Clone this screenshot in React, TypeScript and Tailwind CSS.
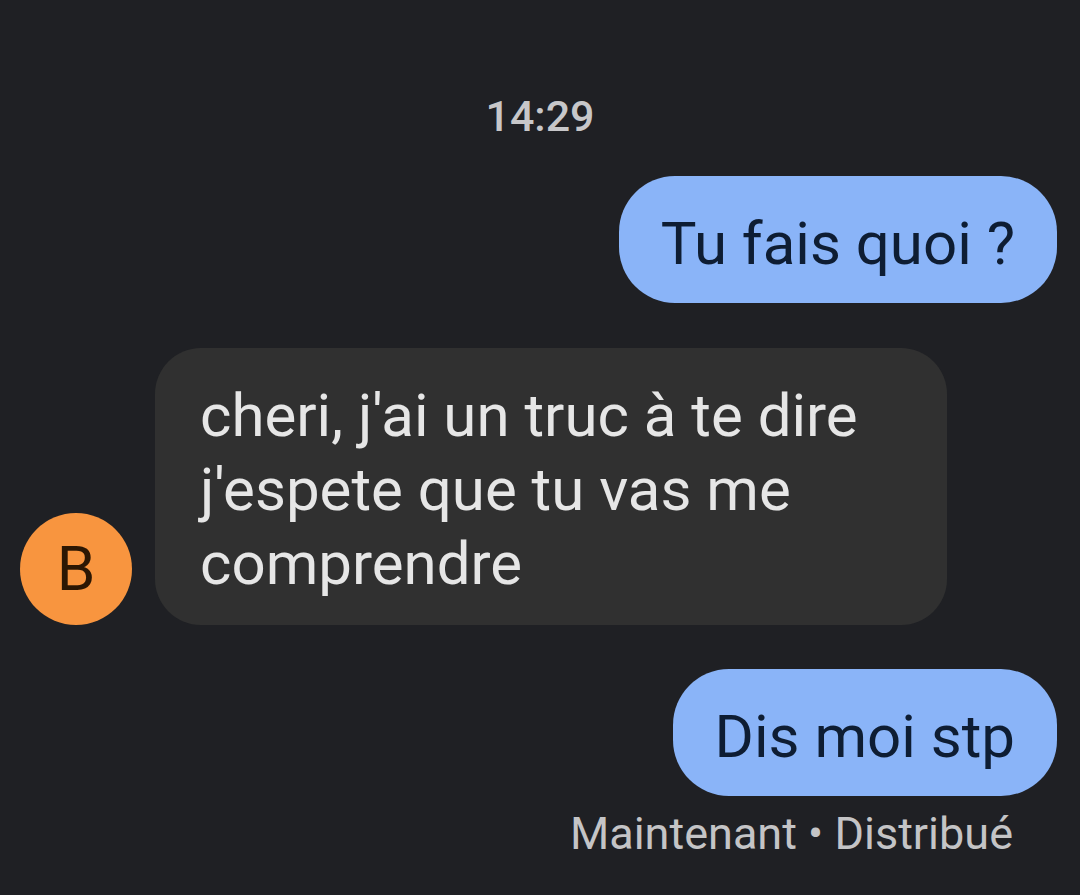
import React from "react";

const incoming = ["cheri, j'ai un truc à te dire", "j'espete que tu vas me", "comprendre"];

function Outgoing({ text }: { text: string }) {
  return (
    <div className="flex justify-end pr-[23px]">
      <div className="rounded-[56px] bg-[#8ab4f8] px-[42px] pt-[31px] pb-[22px] text-[60px] leading-[74px] text-[#0e1d33]">
        {text}
      </div>
    </div>
  );
}

export default function App() {
  return (
    <div className="h-[895px] w-full overflow-hidden bg-[#1f2024] font-['Roboto','Noto_Sans',sans-serif]">
      {/* heure */}
      <div className="pt-[90px] text-center text-[43px] leading-[52px] font-medium text-[#c7c7c9]">
        14:29
      </div>

      <div className="mt-[34px]">
        <Outgoing text="Tu fais quoi ?" />
      </div>

      {/* message reçu */}
      <div className="mt-[45px] flex items-end pl-[20px]">
        <div className="flex h-[112px] w-[112px] shrink-0 items-center justify-center rounded-full bg-[#f8953f] text-[62px] leading-none text-[#2c1703]">
          B
        </div>
        <div className="ml-[23px] w-[792px] rounded-[46px] bg-[#303030] px-[45px] pt-[31px] pb-[24px] text-[60px] leading-[74px] text-[#e6e6e6]">
          {incoming.map((line, i) => (
            <div key={i}>{line}</div>
          ))}
        </div>
      </div>

      <div className="mt-[44px]">
        <Outgoing text="Dis moi stp" />
      </div>

      <div className="mt-[12px] pr-[67px] text-right text-[45px] leading-[52px] text-[#c4c4c6]">
        Maintenant • Distribué
      </div>
    </div>
  );
}
